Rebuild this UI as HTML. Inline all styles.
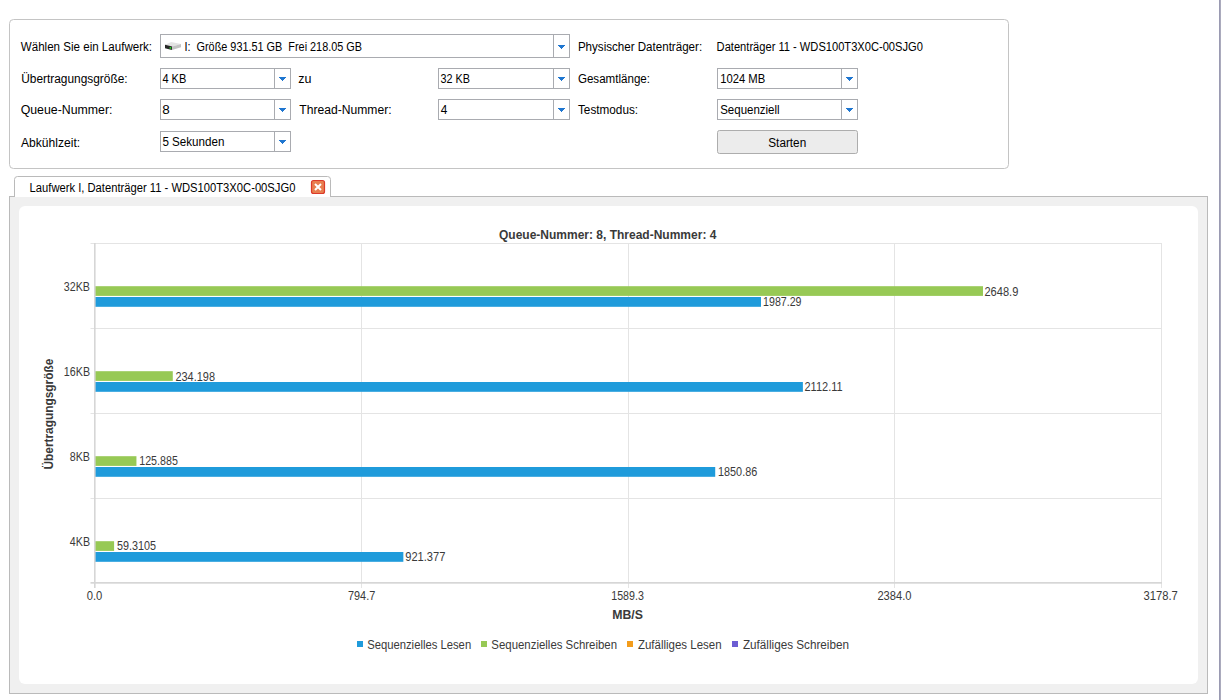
<!DOCTYPE html>
<html><head><meta charset="utf-8"><title>Benchmark</title>
<style>
html,body{margin:0;padding:0;background:#fff;width:1221px;height:700px;overflow:hidden;}
svg{display:block;}
text{font-family:"Liberation Sans",sans-serif;white-space:pre;}
</style></head><body>
<svg width="1221" height="700" viewBox="0 0 1221 700">
<rect x="0" y="0" width="1221" height="700" fill="#ffffff"/>
<rect x="1219" y="0" width="1" height="700" fill="#9a9ab2"/>
<rect x="1220" y="0" width="1" height="700" fill="#ababbd"/>
<rect x="9.5" y="19.5" width="999" height="149" rx="4" ry="4" fill="#ffffff" stroke="#c4c4c4" stroke-width="1"/>
<rect x="160.5" y="34.5" width="409" height="23" fill="#ffffff" stroke="#a9abb0" stroke-width="1"/>
<rect x="553" y="34" width="1" height="24" fill="#a9abb0"/>
<path d="M558 45 h7 v1 h-1 v1 h-1 v1 h-1 v1 h-1 v-1 h-1 v-1 h-1 v-1 h-1 Z" fill="#1f76d0"/>
<rect x="160.5" y="68.5" width="130" height="20" fill="#ffffff" stroke="#a9abb0" stroke-width="1"/>
<rect x="274" y="68" width="1" height="21" fill="#a9abb0"/>
<path d="M279 77 h7 v1 h-1 v1 h-1 v1 h-1 v1 h-1 v-1 h-1 v-1 h-1 v-1 h-1 Z" fill="#1f76d0"/>
<rect x="160.5" y="99.5" width="130" height="20" fill="#ffffff" stroke="#a9abb0" stroke-width="1"/>
<rect x="274" y="99" width="1" height="21" fill="#a9abb0"/>
<path d="M279 108 h7 v1 h-1 v1 h-1 v1 h-1 v1 h-1 v-1 h-1 v-1 h-1 v-1 h-1 Z" fill="#1f76d0"/>
<rect x="160.5" y="131.5" width="130" height="20" fill="#ffffff" stroke="#a9abb0" stroke-width="1"/>
<rect x="274" y="131" width="1" height="21" fill="#a9abb0"/>
<path d="M279 140 h7 v1 h-1 v1 h-1 v1 h-1 v1 h-1 v-1 h-1 v-1 h-1 v-1 h-1 Z" fill="#1f76d0"/>
<rect x="438.5" y="68.5" width="131" height="20" fill="#ffffff" stroke="#a9abb0" stroke-width="1"/>
<rect x="553" y="68" width="1" height="21" fill="#a9abb0"/>
<path d="M558 77 h7 v1 h-1 v1 h-1 v1 h-1 v1 h-1 v-1 h-1 v-1 h-1 v-1 h-1 Z" fill="#1f76d0"/>
<rect x="438.5" y="99.5" width="131" height="20" fill="#ffffff" stroke="#a9abb0" stroke-width="1"/>
<rect x="553" y="99" width="1" height="21" fill="#a9abb0"/>
<path d="M558 108 h7 v1 h-1 v1 h-1 v1 h-1 v1 h-1 v-1 h-1 v-1 h-1 v-1 h-1 Z" fill="#1f76d0"/>
<rect x="717.5" y="68.5" width="140" height="20" fill="#ffffff" stroke="#a9abb0" stroke-width="1"/>
<rect x="841" y="68" width="1" height="21" fill="#a9abb0"/>
<path d="M846 77 h7 v1 h-1 v1 h-1 v1 h-1 v1 h-1 v-1 h-1 v-1 h-1 v-1 h-1 Z" fill="#1f76d0"/>
<rect x="717.5" y="99.5" width="140" height="20" fill="#ffffff" stroke="#a9abb0" stroke-width="1"/>
<rect x="841" y="99" width="1" height="21" fill="#a9abb0"/>
<path d="M846 108 h7 v1 h-1 v1 h-1 v1 h-1 v1 h-1 v-1 h-1 v-1 h-1 v-1 h-1 Z" fill="#1f76d0"/>
<rect x="717.5" y="130.5" width="140" height="23" rx="2" ry="2" fill="#ececec" stroke="#adadad" stroke-width="1"/>
<g><path d="M165 44.7 L171.2 41.9 L181 44 L172.3 46.6 Z" fill="#e3e3e3"/><path d="M165 44.7 L172.3 46.6 L171.9 50 L165 48.2 Z" fill="#262626"/><path d="M172.3 46.6 L181 44 L181 47.2 L171.9 50 Z" fill="#c2c2c2"/><circle cx="170.4" cy="47.9" r="0.95" fill="#22dd22"/></g>
<rect x="9.5" y="196.5" width="1198" height="497" fill="#f0f0f0" stroke="#bababa" stroke-width="1"/>
<rect x="19" y="206" width="1179" height="478" rx="6" ry="6" fill="#ffffff"/>
<path d="M14.5 197 L14.5 179.5 Q14.5 176.5 17.5 176.5 L327.5 176.5 Q330.5 176.5 330.5 179.5 L330.5 197" fill="#ffffff" stroke="#bababa" stroke-width="1"/>
<rect x="15" y="196" width="315" height="1" fill="#ffffff"/>
<rect x="311.5" y="180.5" width="13" height="13" rx="2" ry="2" fill="#e87e4f" stroke="#dc3a2a" stroke-width="1.2"/>
<path d="M315 184 L321 190 M321 184 L315 190" stroke="#ffffff" stroke-width="2" stroke-linecap="butt"/>
<rect x="90.5" y="243" width="1071" height="1" fill="#e4e4e4"/>
<rect x="90.5" y="328" width="1071" height="1" fill="#e4e4e4"/>
<rect x="90.5" y="413" width="1071" height="1" fill="#e4e4e4"/>
<rect x="90.5" y="498" width="1071" height="1" fill="#e4e4e4"/>
<rect x="361" y="243" width="1" height="345" fill="#e4e4e4"/>
<rect x="628" y="243" width="1" height="345" fill="#e4e4e4"/>
<rect x="894" y="243" width="1" height="345" fill="#e4e4e4"/>
<rect x="1161" y="243" width="1" height="345" fill="#e4e4e4"/>
<rect x="94.20" y="286.20" width="888.79" height="9.70" fill="#97c955"/>
<rect x="94.20" y="297.00" width="666.80" height="9.80" fill="#1f9bdb"/>
<rect x="94.20" y="371.20" width="78.58" height="9.70" fill="#97c955"/>
<rect x="94.20" y="382.00" width="708.68" height="9.80" fill="#1f9bdb"/>
<rect x="94.20" y="456.20" width="42.24" height="9.70" fill="#97c955"/>
<rect x="94.20" y="467.00" width="621.02" height="9.80" fill="#1f9bdb"/>
<rect x="94.20" y="541.20" width="19.90" height="9.70" fill="#97c955"/>
<rect x="94.20" y="552.00" width="309.15" height="9.80" fill="#1f9bdb"/>
<rect x="94" y="243" width="1.6" height="345" fill="#d6d6d6"/>
<rect x="90.5" y="582" width="1071.5" height="1.7" fill="#d6d6d6"/>
<rect x="357" y="641" width="6" height="6" fill="#1f9bdb"/>
<rect x="481" y="641" width="6" height="6" fill="#97c955"/>
<rect x="627" y="641" width="6" height="6" fill="#f39c1b"/>
<rect x="732" y="641" width="6" height="6" fill="#6c5dd3"/>
<text x="20.772" y="51" textLength="131.293" lengthAdjust="spacingAndGlyphs" font-size="12.5" font-weight="normal" fill="#000">Wählen Sie ein Laufwerk:</text>
<text x="21.184" y="83" textLength="106.461" lengthAdjust="spacingAndGlyphs" font-size="12.5" font-weight="normal" fill="#000">Übertragungsgröße:</text>
<text x="20.677" y="114" textLength="91.761" lengthAdjust="spacingAndGlyphs" font-size="12.5" font-weight="normal" fill="#000">Queue-Nummer:</text>
<text x="21.047" y="147" textLength="59.101" lengthAdjust="spacingAndGlyphs" font-size="12.5" font-weight="normal" fill="#000">Abkühlzeit:</text>
<text x="298.319" y="83" textLength="13.220" lengthAdjust="spacingAndGlyphs" font-size="12.5" font-weight="normal" fill="#000">zu</text>
<text x="299.295" y="114" textLength="92.279" lengthAdjust="spacingAndGlyphs" font-size="12.5" font-weight="normal" fill="#000">Thread-Nummer:</text>
<text x="577.875" y="51" textLength="124.262" lengthAdjust="spacingAndGlyphs" font-size="12.5" font-weight="normal" fill="#000">Physischer Datenträger:</text>
<text x="577.886" y="83" textLength="72.157" lengthAdjust="spacingAndGlyphs" font-size="12.5" font-weight="normal" fill="#000">Gesamtlänge:</text>
<text x="578.015" y="114" textLength="60.058" lengthAdjust="spacingAndGlyphs" font-size="12.5" font-weight="normal" fill="#000">Testmodus:</text>
<text x="716.614" y="51" textLength="206.255" lengthAdjust="spacingAndGlyphs" font-size="12.5" font-weight="normal" fill="#000">Datenträger 11 - WDS100T3X0C-00SJG0</text>
<text x="184.439" y="51" textLength="177.598" lengthAdjust="spacingAndGlyphs" font-size="12.5" font-weight="normal" fill="#000">I:  Größe 931.51 GB  Frei 218.05 GB</text>
<text x="162.407" y="83" textLength="23.925" lengthAdjust="spacingAndGlyphs" font-size="12.5" font-weight="normal" fill="#000">4 KB</text>
<text x="162.198" y="114" textLength="7.485" lengthAdjust="spacingAndGlyphs" font-size="12.5" font-weight="normal" fill="#000">8</text>
<text x="162.383" y="146" textLength="62.045" lengthAdjust="spacingAndGlyphs" font-size="12.5" font-weight="normal" fill="#000">5 Sekunden</text>
<text x="440.425" y="83" textLength="29.494" lengthAdjust="spacingAndGlyphs" font-size="12.5" font-weight="normal" fill="#000">32 KB</text>
<text x="440.708" y="114" textLength="6.580" lengthAdjust="spacingAndGlyphs" font-size="12.5" font-weight="normal" fill="#000">4</text>
<text x="720.142" y="83" textLength="45.148" lengthAdjust="spacingAndGlyphs" font-size="12.5" font-weight="normal" fill="#000">1024 MB</text>
<text x="720.201" y="114" textLength="59.427" lengthAdjust="spacingAndGlyphs" font-size="12.5" font-weight="normal" fill="#000">Sequenziell</text>
<text x="768.283" y="147" textLength="37.922" lengthAdjust="spacingAndGlyphs" font-size="12.5" font-weight="normal" fill="#000">Starten</text>
<text x="29.595" y="192" textLength="265.793" lengthAdjust="spacingAndGlyphs" font-size="12.5" font-weight="normal" fill="#000">Laufwerk I, Datenträger 11 - WDS100T3X0C-00SJG0</text>
<text x="498.971" y="239" textLength="217.417" lengthAdjust="spacingAndGlyphs" font-size="12.5" font-weight="bold" fill="#3a3a3a">Queue-Nummer: 8, Thread-Nummer: 4</text>
<text x="612.220" y="619" textLength="30.706" lengthAdjust="spacingAndGlyphs" font-size="12.5" font-weight="bold" fill="#3a3a3a">MB/S</text>
<text transform="translate(53 700) rotate(-90)" x="230.470" y="0" textLength="110.813" lengthAdjust="spacingAndGlyphs" font-size="12.5" font-weight="bold" fill="#3a3a3a">Übertragungsgröße</text>
<text x="63.826" y="291" textLength="26.140" lengthAdjust="spacingAndGlyphs" font-size="12.5" font-weight="normal" fill="#3a3a3a">32KB</text>
<text x="63.833" y="376" textLength="26.200" lengthAdjust="spacingAndGlyphs" font-size="12.5" font-weight="normal" fill="#3a3a3a">16KB</text>
<text x="69.694" y="461" textLength="20.327" lengthAdjust="spacingAndGlyphs" font-size="12.5" font-weight="normal" fill="#3a3a3a">8KB</text>
<text x="69.818" y="546" textLength="20.219" lengthAdjust="spacingAndGlyphs" font-size="12.5" font-weight="normal" fill="#3a3a3a">4KB</text>
<text x="86.670" y="600" textLength="15.618" lengthAdjust="spacingAndGlyphs" font-size="12.5" font-weight="normal" fill="#3a3a3a">0.0</text>
<text x="348.033" y="600" textLength="27.158" lengthAdjust="spacingAndGlyphs" font-size="12.5" font-weight="normal" fill="#3a3a3a">794.7</text>
<text x="611.228" y="600" textLength="32.631" lengthAdjust="spacingAndGlyphs" font-size="12.5" font-weight="normal" fill="#3a3a3a">1589.3</text>
<text x="877.427" y="600" textLength="34.113" lengthAdjust="spacingAndGlyphs" font-size="12.5" font-weight="normal" fill="#3a3a3a">2384.0</text>
<text x="1143.479" y="600" textLength="34.315" lengthAdjust="spacingAndGlyphs" font-size="12.5" font-weight="normal" fill="#3a3a3a">3178.7</text>
<text x="367.131" y="649" textLength="104.034" lengthAdjust="spacingAndGlyphs" font-size="12.5" font-weight="normal" fill="#3a3a3a">Sequenzielles Lesen</text>
<text x="491.346" y="649" textLength="125.688" lengthAdjust="spacingAndGlyphs" font-size="12.5" font-weight="normal" fill="#3a3a3a">Sequenzielles Schreiben</text>
<text x="637.949" y="649" textLength="83.620" lengthAdjust="spacingAndGlyphs" font-size="12.5" font-weight="normal" fill="#3a3a3a">Zufälliges Lesen</text>
<text x="742.936" y="649" textLength="106.073" lengthAdjust="spacingAndGlyphs" font-size="12.5" font-weight="normal" fill="#3a3a3a">Zufälliges Schreiben</text>
<text x="984.447" y="296" textLength="33.856" lengthAdjust="spacingAndGlyphs" font-size="12.5" font-weight="normal" fill="#3a3a3a">2648.9</text>
<text x="763.076" y="306" textLength="38.449" lengthAdjust="spacingAndGlyphs" font-size="12.5" font-weight="normal" fill="#3a3a3a">1987.29</text>
<text x="175.442" y="381" textLength="39.527" lengthAdjust="spacingAndGlyphs" font-size="12.5" font-weight="normal" fill="#3a3a3a">234.198</text>
<text x="804.471" y="391" textLength="38.150" lengthAdjust="spacingAndGlyphs" font-size="12.5" font-weight="normal" fill="#3a3a3a">2112.11</text>
<text x="139.232" y="465" textLength="38.649" lengthAdjust="spacingAndGlyphs" font-size="12.5" font-weight="normal" fill="#3a3a3a">125.885</text>
<text x="718.013" y="476" textLength="39.205" lengthAdjust="spacingAndGlyphs" font-size="12.5" font-weight="normal" fill="#3a3a3a">1850.86</text>
<text x="116.981" y="550" textLength="39.013" lengthAdjust="spacingAndGlyphs" font-size="12.5" font-weight="normal" fill="#3a3a3a">59.3105</text>
<text x="405.214" y="561" textLength="40.204" lengthAdjust="spacingAndGlyphs" font-size="12.5" font-weight="normal" fill="#3a3a3a">921.377</text>
</svg>
</body></html>
